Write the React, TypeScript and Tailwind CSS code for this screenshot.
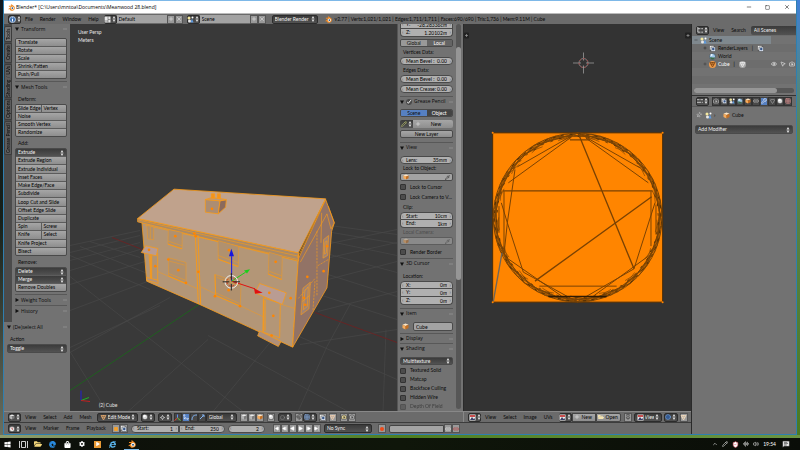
import React from "react";
import clsx from "clsx";
import { FaWindows, FaEdge, FaInternetExplorer, FaShoppingBag, FaFolderOpen, FaCog, FaPlay } from "react-icons/fa";
import {
  AudioLines, Camera, ChevronUp, Circle, Eye, Grid3x3, Link2, Magnet, MessageSquareText, Minus, MousePointer2,
  Move3d, Pencil, Pipette, Pin, Play, Plus, ShieldCheck, SkipBack, SkipForward, Square, StepBack, StepForward, Triangle, Volume2, Wrench, X,
} from "lucide-react";

type IconProps = { className?: string };

/* ---------- small icons ---------- */

const Logo = ({ className = "size-[8px]" }: IconProps) => (
  <svg viewBox="0 0 24 24" className={clsx("shrink-0", className)}>
    <path d="M1 17 11 9H3V6h9L9 3l3-2 9 7c4 4 3 12-3 14-6 3-12 0-12-5l-3 2z" fill="#f08a24" />
    <circle cx="15" cy="14" r="5.5" fill="#fff" />
    <circle cx="15" cy="14" r="3" fill="#265787" />
  </svg>
);

const CubeIcon = ({ className = "size-[7px]" }: IconProps) => (
  <svg viewBox="0 0 14 14" className={clsx("shrink-0", className)}>
    <path d="M7 1 13 3.500 7 6 1 3.500z" fill="#ffe6c4" />
    <path d="M1 3.500 7 6v7L1 10z" fill="#f7ab5a" />
    <path d="M13 3.500 7 6v7l6-3z" fill="#c46f22" />
  </svg>
);

const SphereIcon = ({ className = "size-[6px]" }: IconProps) => (
  <svg viewBox="0 0 12 12" className={clsx("shrink-0", className)}>
    <circle cx="6" cy="6" r="5.500" fill="#d8d8d8" stroke="#222" />
    <circle cx="5" cy="4" r="2.500" fill="#fff" />
  </svg>
);

const SceneIcon = ({ className = "size-[7px]" }: IconProps) => (
  <svg viewBox="0 0 14 14" className={clsx("shrink-0", className)}>
    <circle cx="4" cy="4" r="3" fill="#f5e9a0" />
    <path d="M7 13 10 5l3 8z" fill="#5f9be0" />
    <circle cx="5" cy="10" r="3" fill="#e8e8e8" />
    <circle cx="11" cy="3" r="2" fill="#fff" />
  </svg>
);

const LayersIcon = ({ className = "size-[7px]" }: IconProps) => (
  <svg viewBox="0 0 14 14" className={clsx("shrink-0", className)}>
    <path d="M1 1h9v9H1z" fill="#ececec" stroke="#444" />
    <path d="M4 4h9v9H4z" fill="#d6dfec" stroke="#444" />
    <circle cx="8.500" cy="8" r="2.500" fill="#39588a" />
  </svg>
);

const WorldIcon = ({ className = "size-[7px]" }: IconProps) => (
  <svg viewBox="0 0 14 14" className={clsx("shrink-0", className)}>
    <circle cx="7" cy="7" r="6" fill="#9fc6e8" stroke="#26313d" />
    <path d="M2 9c3-2 6 1 10 0-1 3-3 4-5 4S3 12 2 9z" fill="#3d6b4a" />
    <circle cx="5" cy="4" r="2" fill="#eef6fd" />
  </svg>
);

const InfoIcon = () => (
  <svg viewBox="0 0 14 14" className="size-[7px] shrink-0">
    <circle cx="7" cy="7" r="6" fill="#3f6fae" stroke="#cfe0f5" strokeWidth="1.500" />
    <path d="M7 6v5M7 3v1.500" stroke="#fff" strokeWidth="2" />
  </svg>
);

const ScreenIcon = () => (
  <svg viewBox="0 0 14 14" className="size-[7px] shrink-0">
    <path d="M1 1h12v12H1z" fill="#e8e8e8" />
    <path d="M8 1v12M8 7h5M1 10h7" stroke="#444" fill="none" />
  </svg>
);

const ClockIcon = () => (
  <svg viewBox="0 0 12 12" className="size-[6px] shrink-0">
    <circle cx="6" cy="6" r="5.500" fill="#e4e4e4" stroke="#222" />
    <path d="M6 3v3l2 1" stroke="#b03030" fill="none" strokeWidth="1.500" />
  </svg>
);

const MeshIcon = ({ className = "size-[7px]", color = "#ddd", disc }: IconProps & { color?: string; disc?: string }) => (
  <svg viewBox="0 0 14 14" className={clsx("shrink-0", className)} fill="none" stroke={color} strokeWidth="1.500">
    {disc && <circle cx="7" cy="7" r="7" fill={disc} stroke="none" />}
    <path d="M2 3h10L7 12zM4.500 7.500h5L7 3z" />
  </svg>
);

const AxisIcon = () => (
  <svg viewBox="0 0 14 14" className="size-[7px] shrink-0" fill="none" strokeWidth="2">
    <path d="M7 8V1" stroke="#5f8df0" />
    <path d="M7 8 1 13" stroke="#e04030" />
    <path d="m7 8 6 5" stroke="#58c040" />
  </svg>
);

const ImageIcon = () => (
  <svg viewBox="0 0 14 14" className="size-[7px] shrink-0">
    <path d="M1 1h12v12H1z" fill="#eee" />
    <path d="M2 2h10v4H2z" fill="#c94f4f" />
    <path d="m2 12 4-6 3 4 2-2 1 4z" fill="#3a3f66" />
  </svg>
);

const UpDown = () => (
  <svg viewBox="0 0 6 10" className="h-[6px] w-[4px] shrink-0" fill="#ddd">
    <path d="M3 0 5.500 4H.5zM3 10 .5 6h5z" />
  </svg>
);

const Fold = ({ open = true }: { open?: boolean }) => (
  <svg viewBox="0 0 8 8" className="size-[4px] shrink-0" fill="#111">
    <path d={open ? "M0 1h8L4 8z" : "M1 0v8l7-4z"} />
  </svg>
);

/* ---------- widgets ---------- */

const buttonLook = "bg-linear-to-b from-[#a6a6a6] to-[#8e8e8e] text-black";
const darkLook = "bg-linear-to-b from-[#3b3b3b] to-[#525252] text-[#f0f0f0]";
const frame = "rounded-[2px] border border-[#4a4a4a]";
const darkFrame = "rounded-[2px] border border-[#2c2c2c]";

const ToolButton = ({ children }: { children: React.ReactNode }) => (
  <button className={clsx("flex min-h-0 flex-1 items-center px-[2px] whitespace-nowrap", buttonLook)}>{children}</button>
);

const Dropdown = ({ label, value, className, icon }: { label: string; value: string; className?: string; icon?: React.ReactNode }) => (
  <span className={clsx("flex min-w-0 items-center gap-px px-[2px]", darkLook, className)}>
    {icon}
    <select aria-label={label} className="h-full min-w-0 flex-1 appearance-none bg-transparent leading-none outline-none">
      <option>{value}</option>
    </select>
    <UpDown />
  </span>
);

const IconMenu = ({ label, children, className }: { label: string; children: React.ReactNode; className?: string }) => (
  <button aria-label={label} className={clsx("flex h-[9px] shrink-0 items-center justify-center gap-px", darkFrame, darkLook, className ?? "w-[13px]")}>
    {children}
    <UpDown />
  </button>
);

const IconButton = ({ label, children, active, dark }: { label: string; children: React.ReactNode; active?: boolean; dark?: boolean }) => (
  <button
    aria-label={label}
    className={clsx("flex h-[9px] w-[8px] shrink-0 items-center justify-center border", active ? "border-[#444] bg-[#5680c2] text-white" : dark ? "border-[#333] bg-[#484848] text-[#ddd]" : "border-[#555] bg-[#999] text-[#222]")}
  >
    {children}
  </button>
);

const NumberField = ({ name, value, className = "h-[8px] rounded-[4px] border" }: { name: string; value: string; className?: string }) => (
  <label className={clsx("flex min-w-0 shrink-0 items-center border-[#4a4a4a] bg-[#b0b0b0] px-px whitespace-nowrap text-black", className)}>
    <span className="w-[4px] text-[#555]">‹</span>
    <span>{name}</span>
    <input defaultValue={value} className="w-0 min-w-0 flex-1 bg-transparent text-right leading-none outline-none" />
    <span className="w-[4px] text-right text-[#555]">›</span>
  </label>
);

const Check = ({ label, dim }: { label: string; dim?: boolean }) => (
  <label className={clsx("flex shrink-0 items-center gap-[4px] whitespace-nowrap", dim && "opacity-50")}>
    <input type="checkbox" className="size-[6px] shrink-0 appearance-none rounded-[1px] border border-[#333] bg-[#4c4c4c]" />
    <span>{label}</span>
  </label>
);

const SectionHeader = ({ title, open = true, line = true, children }: { title: string; open?: boolean; line?: boolean; children?: React.ReactNode }) => (
  <h2 className={clsx("flex shrink-0 items-center gap-[2px] whitespace-nowrap", line && "border-t border-[#585858]")}>
    <Fold open={open} />
    {children}
    <span className="flex-1 font-['Open_Sans',sans-serif]">{title}</span>
    <svg viewBox="0 0 8 4" className="h-[2px] w-[4px] shrink-0" stroke="#aaa" strokeDasharray="1 1"><path d="M0 1h8M0 3h8" /></svg>
  </h2>
);

const Menu = ({ items, className }: { items: string[]; className?: string }) => (
  <nav className={clsx("flex shrink-0 items-center gap-[7px]", className)}>
    {items.map((item) => (
      <button key={item}>{item}</button>
    ))}
  </nav>
);

/* ---------- top bars ---------- */

const TitleBar = () => (
  <div className="flex h-[13px] shrink-0 items-center border-t border-[#7db8e8] bg-white pl-[4px] text-black">
    <Logo className="size-[7px]" />
    <h1 className="ml-px flex-1 font-['Open_Sans',sans-serif]">Blender* [C:\Users\mntoa\Documents\Meanwood 28.blend]</h1>
    <button aria-label="Minimise" className="flex w-[19px] justify-center"><Minus size={6} /></button>
    <button aria-label="Maximise" className="flex w-[19px] justify-center"><Square size={5} /></button>
    <button aria-label="Close" className="flex w-[19px] justify-center"><X size={6} /></button>
  </div>
);

const DataField = ({ label, value, icon }: { label: string; value: string; icon: React.ReactNode }) => (
  <div className="flex shrink-0 items-center">
    <IconMenu label={`Browse ${label}`}>{icon}</IconMenu>
    <input aria-label={label} defaultValue={value} className="h-[8px] w-[50px] bg-[#a3a3a3] px-[2px] leading-none text-black outline-none" />
    <IconButton label={`Add ${label}`}><Plus size={6} color="#eee" /></IconButton>
    <IconButton label={`Remove ${label}`}><X size={6} color="#eee" /></IconButton>
  </div>
);

const InfoBar = () => (
  <header className="flex h-[11px] shrink-0 items-center border-t border-[#bbb] bg-[#6b6b6b] pl-[4px]">
    <IconMenu label="Editor type"><InfoIcon /></IconMenu>
    <Menu items={["File", "Render", "Window", "Help"]} className="mr-[5px] ml-[4px]" />
    <DataField label="screen" value="Default" icon={<ScreenIcon />} />
    <div className="w-[4px]" />
    <DataField label="scene" value="Scene" icon={<SceneIcon />} />
    <Dropdown label="Render engine" value="Blender Render" className={clsx("ml-[6px] h-[9px] w-[46px]", darkFrame)} />
    <Logo className="mr-[3px] ml-[7px] size-[7px]" />
    <p className="whitespace-nowrap">v2.77 | Verts:1,021/1,021 | Edges:1,711/1,711 | Faces:690/690 | Tris:1,736 | Mem:9.11M | Cube</p>
  </header>
);

/* ---------- tool shelf ---------- */

const tabs = [
  { name: "Tools", height: "h-[16px]" },
  { name: "Create", height: "h-[20px]" },
  { name: "Shading / UVs", height: "h-[34px]" },
  { name: "Options", height: "h-[21px]" },
  { name: "Grease Pencil", height: "h-[34px]" },
];

const addTools = ["Extrude Region", "Extrude Individual", "Inset Faces", "Make Edge/Face", "Subdivide", "Loop Cut and Slide", "Offset Edge Slide", "Duplicate"];

const toolGroup = clsx("flex shrink-0 flex-col gap-px overflow-hidden bg-[#5c5c5c]", frame);
const shelfLabel = "flex h-[9px] shrink-0 items-center px-[3px]";

const ToolShelf = () => (
  <aside className="flex w-[66px] shrink-0 flex-col bg-[#727272]">
    <div className="flex h-[298px] shrink-0">
      <div className="flex w-[8px] shrink-0 flex-col gap-px bg-[#4b4b4b] pt-[2px]">
        {tabs.map((tab, i) => (
          <button key={tab.name} className={clsx("flex shrink-0 rotate-180 items-center justify-center rounded-r-[2px] border border-[#3c3c3c] whitespace-nowrap [writing-mode:vertical-rl]", tab.height, i === 0 ? "bg-[#727272]" : "bg-[#5c5c5c]")}>
            {tab.name}
          </button>
        ))}
      </div>
      <div className="flex min-w-0 flex-1 flex-col px-[3px]">
        <div className="flex h-[10px] flex-col *:flex-1"><SectionHeader title="Transform" line={false} /></div>
        <div className={clsx("mt-[4px] h-[41px]", toolGroup)}>
          {["Translate", "Rotate", "Scale", "Shrink/Fatten", "Push/Pull"].map((t) => <ToolButton key={t}>{t}</ToolButton>)}
        </div>
        <div className="mt-[2px] flex h-[11px] flex-col *:flex-1"><SectionHeader title="Mesh Tools" /></div>
        <p className={clsx("mt-[3px]", shelfLabel)}>Deform:</p>
        <div className={clsx("h-[33px]", toolGroup)}>
          <div className="grid min-h-0 flex-1 grid-cols-2 gap-px"><ToolButton>Slide Edge</ToolButton><ToolButton>Vertex</ToolButton></div>
          {["Noise", "Smooth Vertex", "Randomize"].map((t) => <ToolButton key={t}>{t}</ToolButton>)}
        </div>
        <p className={clsx("mt-[2px]", shelfLabel)}>Add:</p>
        <div className={clsx("h-[108px]", toolGroup)}>
          <Dropdown label="Extrude" value="Extrude" className="min-h-0 flex-1" />
          {addTools.map((t) => <ToolButton key={t}>{t}</ToolButton>)}
          <div className="grid min-h-0 flex-1 grid-cols-2 gap-px"><ToolButton>Spin</ToolButton><ToolButton>Screw</ToolButton></div>
          <div className="grid min-h-0 flex-1 grid-cols-2 gap-px"><ToolButton>Knife</ToolButton><ToolButton>Select</ToolButton></div>
          <ToolButton>Knife Project</ToolButton>
          <ToolButton>Bisect</ToolButton>
        </div>
        <p className={clsx("mt-[2px]", shelfLabel)}>Remove:</p>
        <div className={clsx("h-[25px]", toolGroup)}>
          <Dropdown label="Delete" value="Delete" className="min-h-0 flex-1" />
          <Dropdown label="Merge" value="Merge" className="min-h-0 flex-1" />
          <ToolButton>Remove Doubles</ToolButton>
        </div>
        <div className="mt-[2px] flex h-[22px] flex-col *:flex-1">
          <SectionHeader title="Weight Tools" open={false} />
          <SectionHeader title="History" open={false} />
        </div>
      </div>
    </div>
    <div className="flex flex-col px-[3px]">
      <div className="flex h-[10px] flex-col *:flex-1"><SectionHeader title="(De)select All" line={false} /></div>
      <p className={clsx("mt-[3px]", shelfLabel)}>Action</p>
      <Dropdown label="Action" value="Toggle" className={clsx("h-[9px]", frame)} />
    </div>
  </aside>
);

/* ---------- 3D viewport ---------- */

const gridLines = [
  [70, 246, 140, 231], [70, 253, 140, 236], [70, 261, 140, 243], [70, 271, 140, 250], [70, 285, 145, 262], [70, 311, 150, 281], [70, 348, 160, 306],
  [70, 353, 93, 340], [93, 340, 170, 298], [128, 412, 208, 340], [213, 412, 270, 343], [298, 412, 327, 347], [383, 412, 386, 330],
  [90, 242, 140, 258], [80, 247, 150, 275], [70, 256, 150, 290], [70, 277, 243, 412], [70, 352, 107, 412], [208, 336, 348, 412], [290, 333, 397, 380],
  [330, 226, 397, 235], [332, 233, 397, 244], [330, 242, 397, 256], [330, 255, 397, 273], [328, 275, 397, 297], [322, 296, 397, 320],
  [330, 244, 397, 230], [330, 258, 397, 243], [328, 280, 397, 262], [318, 312, 397, 292], [300, 345, 397, 330], [327, 347, 350, 305],
];

const houseDots = [
  [208, 162], [312, 212], [212, 170], [452, 247], [151, 170], [160, 272], [311, 332], [433, 340], [445, 409], [220, 277], [72, 211], [91, 260],
  [497, 356], [547, 292], [596, 275], [541, 376], [606, 200], [440, 468], [261, 88], [537, 355], [270, 350], [345, 380], [130, 240], [183, 310],
];

const House = () => (
  <g transform="translate(125 180) scale(.3333)" stroke="#f59a1c" strokeWidth="2.500" strokeLinejoin="round">
    <path d="M50 118 520 222 520 238 503 503 222 374 65 305z" fill="#b39677" />
    <path d="M602 60 628 130 620 155 606 325 503 503 520 238z" fill="#927366" />
    <path d="M38 117v10L520 245v-25z" fill="#a98a68" />
    <path d="M147 29 602 58 520 220 38 117z" fill="#c0a28c" />
    <path d="M42 122 520 230M60 137 518 240" fill="none" strokeWidth="2" />
    <path d="m602 58-84 176M610 80l18 50-10 18-12-45-80 145M590 100l-2 90" fill="none" strokeWidth="2" />
    {/* chimney */}
    <path d="M241 60 285 64 280 103 241 98z" fill="#ac8d72" />
    <path d="m285 64 19-3-2 22-22 20z" fill="#8b6a5c" />
    <path d="m241 60 20-6 43 6-19 4z" fill="#b8977c" />
    <path d="M259 56V43h10v14zM277 57V43h9v15z" fill="#f5931a" />
    {/* down pipe and string course */}
    <path d="M211 165 220 374M219 167 227 375" fill="none" strokeWidth="3" />
    <path d="M95 275 218 328M227 322 415 412M470 375 510 387" fill="none" strokeWidth="1.500" />
    {/* windows */}
    <g fill="#b0916f" strokeWidth="1.500">
      <path d="m66 138 20 5v38l-18-3zM76 142v37" />
      <path d="m130 150 42 9-1 49-42-14zM130 185l42 14" />
      <path d="m279 183 62 18-1 60-60-22zM279 228l62 22" />
      <path d="m432 218 40 12-2 70-40-16zM432 275l38 14" />
      <path d="m131 235 52 14v63l-52-22zM134 245l45 12M131 282l50 20" />
      <path d="m270 285 78 28-2 67-74-32zM276 294l66 24M272 340l72 32" />
    </g>
    <path d="m279 239 60 22M129 194l42 14M131 290l52 22M270 285l2 63 74 32M430 284l40 16" fill="none" strokeWidth="3" />
    <path d="m534 326 22-18-4 80-24 18zM540 332l10-9-3 58-12 10zM532 366l22-18M596 180l15-12-3 60-14 8zM600 188l6-4-2 36-6 4z" fill="#a08374" strokeWidth="2" />
    <path d="M576 155v103M610 240l-34 20v90M520 357l50-60M570 305l-6 88" fill="none" strokeWidth="2" strokeDasharray="7 3" />
    {/* porches */}
    <path d="M72 228 98 222 98 305 80 300z" fill="#b19474" />
    <path d="M76 228v68M80 228v70" fill="none" strokeWidth="3" />
    <path d="m62 199 37 8-5 22-45-10z" fill="#b99c93" />
    <path d="m65 294 34 8v10l-34-10z" fill="#b0917a" />
    <path d="M416 355 466 372 464 475 414 458z" fill="#b39677" />
    <path d="M415 358v98M420 362v92" fill="none" strokeWidth="3" />
    <path d="m404 312 80 28-12 35-82-35z" fill="#b99c93" />
    <path d="m404 454 64 32-8 15-62-32z" fill="#af8f79" />
    <g fill="#ff8500" stroke="none">
      {houseDots.map(([x, y]) => <circle key={`${x}-${y}`} cx={x} cy={y} r="4" />)}
    </g>
    {/* transform manipulator */}
    <g fill="none" strokeWidth="3">
      <path d="M320 305V230" stroke="#1515e0" />
      <path d="m320 305 70 23" stroke="#e01010" />
      <path d="m320 305 42-27" stroke="#18d018" />
      <circle cx="319" cy="307" r="19" stroke="#eee" />
      <circle cx="319" cy="307" r="13" stroke="#d03a20" strokeDasharray="6 5" />
      <path d="M319 281v20M319 313v20M293 307h20M325 307h20" stroke="#222" />
    </g>
    <path d="m312 230 7-22 8 22z" fill="#1515e0" stroke="none" />
    <path d="m387 326 26 14-23 3z" fill="#e01010" stroke="none" />
    <path d="m357 273 18-4-9 13z" fill="#18d018" stroke="none" />
  </g>
);

const Viewport = () => (
  <section className="relative min-w-0 flex-1 overflow-hidden bg-[#393939] text-[#e4e4e4]">
    <svg viewBox="70 24 327 388" preserveAspectRatio="xMidYMid slice" className="size-full">
      <g stroke="#484848" strokeWidth=".7">
        {gridLines.map(([x1, y1, x2, y2]) => <line key={`${x1}-${y1}-${x2}-${y2}`} x1={x1} y1={y1} x2={x2} y2={y2} />)}
      </g>
      <path d="m112 238 33 13M315 313l82 30" stroke="#701f1f" strokeWidth=".8" />
      <path d="m70 391 129-86" stroke="#1f5f1f" />
      <House />
      <g fill="none">
        <path d="M81 401V391" stroke="#2020d0" />
        <path d="m81 401 8-3" stroke="#20b020" />
        <path d="m81 401 9 1" stroke="#c02020" />
      </g>
    </svg>
    <div className="absolute top-[4px] left-[8px] leading-[8px]">
      <p>User Persp</p>
      <p>Meters</p>
    </div>
    <p className="absolute bottom-[3px] left-[29px]">(2) Cube</p>
  </section>
);

/* ---------- properties region of the 3D view ---------- */

const groupRow = "h-[8px] border-x border-b";
const regionLabel = "flex shrink-0 items-center px-[3px]";

const ObjectPicker = ({ label, dim }: { label: string; dim?: boolean }) => (
  <div className={clsx("flex h-[8px] shrink-0 items-center bg-[#a3a3a3] px-[2px]", frame, dim && "opacity-50")}>
    <CubeIcon className="size-[6px]" />
    <input aria-label={label} className="w-0 min-w-0 flex-1 bg-transparent outline-none" />
    <Pipette size={5} color="#222" />
  </div>
);

const SideRegion = () => (
  <aside className="flex w-[66px] shrink-0 overflow-hidden border-l border-[#555] bg-[#727272]">
    <div className="flex min-w-0 flex-1 flex-col pr-[3px] pl-[2px]">
      <div className="flex h-[13px] shrink-0 flex-col justify-end overflow-hidden">
        <NumberField name="Y:" value="-28.28336cm" className={groupRow} />
        <NumberField name="Z:" value="1.20102m" className={clsx(groupRow, "rounded-b-[4px]")} />
      </div>
      <div className={clsx("mt-[2px] flex h-[8px] shrink-0 overflow-hidden", frame)}>
        <button className="flex-1 bg-[#999]">Global</button>
        <button className="flex-1 bg-[#646464] text-white">Local</button>
      </div>
      <p className={clsx("h-[10px]", regionLabel)}>Vertices Data:</p>
      <NumberField name="Mean Bevel :" value="0.00" />
      <p className={clsx("h-[10px]", regionLabel)}>Edges Data:</p>
      <NumberField name="Mean Bevel :" value="0.00" />
      <NumberField name="Mean Crease:" value="0.00" className="mt-[2px] h-[8px] rounded-[4px] border" />
      <div className="mt-[3px] flex h-[10px] shrink-0 flex-col *:flex-1">
        <SectionHeader title="Grease Pencil">
          <input type="checkbox" defaultChecked aria-label="Grease Pencil" className="size-[6px] rounded-[1px] accent-[#4a4a4a]" />
        </SectionHeader>
      </div>
      <div className={clsx("mt-[3px] flex h-[8px] shrink-0 overflow-hidden", frame)}>
        <button className="flex-1 bg-[#5680c2]">Scene</button>
        <button className="flex-1 bg-[#444] text-white">Object</button>
      </div>
      <div className="mt-[3px] flex h-[8px] shrink-0">
        <button aria-label="Browse grease pencil" className={clsx("flex w-[13px] items-center justify-center gap-px rounded-l-[2px]", darkLook)}>
          <Pencil size={6} color="#c9d070" /><UpDown />
        </button>
        <button className={clsx("flex flex-1 items-center rounded-r-[2px] px-[2px]", buttonLook)}>
          <Plus size={6} color="#eee" /><span className="flex-1">New</span>
        </button>
      </div>
      <button className={clsx("mt-[2px] h-[8px] shrink-0", buttonLook, frame)}>New Layer</button>
      <div className="mt-[4px] flex h-[10px] shrink-0 flex-col *:flex-1"><SectionHeader title="View" /></div>
      <NumberField name="Lens:" value="35mm" className="mt-[4px] h-[8px] rounded-[4px] border" />
      <p className={clsx("h-[9px]", regionLabel)}>Lock to Object:</p>
      <ObjectPicker label="Lock to Object" />
      <div className="flex h-[22px] shrink-0 flex-col pt-px *:h-[10px]">
        <Check label="Lock to Cursor" />
        <Check label="Lock Camera to V…" />
      </div>
      <p className={clsx("h-[9px]", regionLabel)}>Clip:</p>
      <NumberField name="Start:" value="10cm" className="h-[8px] rounded-t-[4px] border" />
      <NumberField name="End:" value="1km" className={clsx(groupRow, "rounded-b-[4px]")} />
      <p className={clsx("h-[9px] text-[#4c4c4c]", regionLabel)}>Local Camera:</p>
      <ObjectPicker label="Local Camera" dim />
      <div className="flex h-[13px] shrink-0 flex-col pt-[2px] *:h-[10px]"><Check label="Render Border" /></div>
      <div className="flex h-[10px] shrink-0 flex-col *:flex-1"><SectionHeader title="3D Cursor" /></div>
      <p className={clsx("mt-[3px] h-[10px]", regionLabel)}>Location:</p>
      <NumberField name="X:" value="0m" className="h-[8px] rounded-t-[4px] border" />
      <NumberField name="Y:" value="0m" className={groupRow} />
      <NumberField name="Z:" value="0m" className={clsx(groupRow, "rounded-b-[4px]")} />
      <div className="mt-[3px] flex h-[10px] shrink-0 flex-col *:flex-1"><SectionHeader title="Item" /></div>
      <div className="mt-[4px] flex h-[9px] shrink-0 items-center gap-[4px] pl-[2px]">
        <CubeIcon />
        <input aria-label="Object name" defaultValue="Cube" className={clsx("h-full w-0 flex-1 bg-[#a3a3a3] px-[2px] leading-none text-black outline-none", frame)} />
      </div>
      <div className="mt-[2px] flex h-[20px] shrink-0 flex-col *:flex-1">
        <SectionHeader title="Display" open={false} />
        <SectionHeader title="Shading" />
      </div>
      <Dropdown label="Shading mode" value="Multitexture" className={clsx("mt-[4px] h-[8px] shrink-0", frame)} />
      <div className="mt-px flex shrink-0 flex-col *:h-[9px]">
        <Check label="Textured Solid" />
        <Check label="Matcap" />
        <Check label="Backface Culling" />
        <Check label="Hidden Wire" />
        <Check label="Depth Of Field" dim />
      </div>
    </div>
    <div className="mr-[2px] mb-[2px] w-[5px] shrink-0 rounded-full bg-[#565656] pt-[23px]">
      <div className="h-[233px] rounded-full bg-[#969696]" />
    </div>
  </aside>
);

const View3DHeader = () => (
  <header className="flex h-[11px] shrink-0 items-center overflow-hidden border-t border-[#888] bg-[#6b6b6b] pl-[4px]">
    <IconMenu label="Editor type"><CubeIcon className="size-[6px] grayscale" /></IconMenu>
    <Menu items={["View", "Select", "Add", "Mesh"]} className="ml-[4px]" />
    <Dropdown label="Mode" value="Edit Mode" icon={<MeshIcon color="#f0b070" />} className={clsx("ml-[5px] h-[9px] w-[41px] shrink-0", darkFrame)} />
    <div className="ml-[3px] flex gap-[3px]">
      <IconMenu label="Viewport shading" className="w-[14px]"><SphereIcon /></IconMenu>
      <IconMenu label="Pivot point" className="w-[14px]">
        <svg viewBox="0 0 6 6" className="size-[5px]" fill="none" stroke="#ccc"><circle cx="3" cy="3" r="1.500" /><path d="M3 0v1M3 5v1M0 3h1M5 3h1" /></svg>
      </IconMenu>
    </div>
    <div className="ml-[2px] flex">
      <IconButton label="Manipulator" dark><AxisIcon /></IconButton>
      <IconButton label="Translate manipulator" active><Move3d size={6} /></IconButton>
      <IconButton label="Rotate manipulator" dark><svg viewBox="0 0 6 6" className="size-[6px]" fill="none" stroke="#7fb0ee"><path d="M1 6c0-3 1-5 5-5" /></svg></IconButton>
      <IconButton label="Scale manipulator" dark><svg viewBox="0 0 6 6" className="size-[6px]" fill="none" stroke="#7fb0ee"><path d="m1 5 4-4M3 1h2v2" /></svg></IconButton>
    </div>
    <Dropdown label="Orientation" value="Global" className="h-[9px] w-[31px] shrink-0 rounded-r-[2px] border border-[#2c2c2c]" />
    <div className="ml-[3px] flex">
      <IconButton label="Vertex select"><CubeIcon className="size-[6px] grayscale" /></IconButton>
      <IconButton label="Edge select"><CubeIcon className="size-[6px] grayscale" /></IconButton>
      <IconButton label="Face select"><CubeIcon className="size-[6px]" /></IconButton>
    </div>
    <div className="ml-[3px] flex gap-[3px]">
      <IconButton label="Limit selection"><SphereIcon /></IconButton>
      <IconMenu label="Proportional editing" className="w-[14px]"><Circle size={5} color="#999" /></IconMenu>
    </div>
    <div className="ml-[3px] flex">
      <IconButton label="Snap"><Magnet size={6} /></IconButton>
      <IconMenu label="Snap element" className="w-[14px]"><Grid3x3 size={6} color="#88b4ee" /></IconMenu>
    </div>
    <div className="ml-[2px] flex gap-[2px]">
      <IconButton label="Snap onto itself"><LayersIcon /></IconButton>
      <IconButton label="Automerge"><MeshIcon color="#f3d0b0" /></IconButton>
    </div>
    <div className="ml-[3px] flex">
      <IconButton label="Render image"><Camera size={6} color="#222" fill="#f0e0a0" /></IconButton>
      <IconButton label="Render animation"><Camera size={6} color="#222" fill="#bbb" /></IconButton>
    </div>
  </header>
);

/* ---------- UV editor ---------- */

// Outer ring of the unwrapped faces: chords that skip `step` points of `count` on one circle.
const ringPath = (count: number, step: number, radius: number) => {
  let d = "";
  for (let i = 0; i < count; i++) {
    const a = (i / count) * Math.PI * 2 - Math.PI / 2;
    const b = ((i + step) / count) * Math.PI * 2 - Math.PI / 2;
    d += `M${293 + radius * Math.cos(a)} ${294 + radius * Math.sin(a)}L${293 + radius * Math.cos(b)} ${294 + radius * Math.sin(b)}`;
  }
  return d;
};

const UVEditor = () => (
  <section className="flex min-w-0 flex-1 overflow-hidden border-l border-[#2a2a2a] bg-[#333]">
    <svg viewBox="464 24 227 388" preserveAspectRatio="xMidYMid slice" className="size-full">
      <rect x="464" y="33" width="5" height="6" rx="1" fill="#222" />
      <path d="M466.500 34.500v3M465 36h3" stroke="#999" strokeWidth=".7" />
      <rect x="685" y="33" width="6" height="6" rx="1" fill="#222" />
      <path d="M688 34.500v3M686.500 36h3" stroke="#999" strokeWidth=".7" />
      <g fill="none" strokeWidth=".8">
        <path d="M583.500 53v8M583.500 66v8M573 63.500h8M586 63.500h8" stroke="#999" />
        <circle cx="583.500" cy="63.500" r="4.500" stroke="#999" />
        <circle cx="583.500" cy="63.500" r="4.500" stroke="#a03030" strokeDasharray="2 2" />
      </g>
      <g transform="translate(480 120) scale(.3333)">
        <path d="M38 40h510v508H38z" fill="#ff8500" stroke="#4a2c08" strokeWidth="3" />
        <g fill="none" stroke="#7a4405" strokeWidth="2">
          <path d={ringPath(64, 1, 253)} strokeWidth="3" />
          <path d={ringPath(38, 3, 253)} />
          <path d={ringPath(23, 2, 253)} strokeWidth="3" />
          <path d={ringPath(17, 2, 253)} strokeDasharray="70 50" />
          <path d={ringPath(29, 1, 246)} strokeWidth="3" strokeDasharray="34 9" />
        </g>
        <g fill="none" stroke="#3a2204" strokeWidth="2">
          <path d={ringPath(31, 1, 251)} strokeDasharray="9 17" />
          <path d={ringPath(27, 1, 243)} strokeDasharray="8 21" />
        </g>
        <g fill="none" stroke="#7a4203" strokeWidth="4">
          <path d="M68 214h450M295 42 462 448M515 232 165 485M270 61h60" />
          <path d="M105 150 82 310 72 405" strokeWidth="3" />
          <path d="M66 400 40 546" stroke="#6b655c" />
          <path d="M64 250 82 310 130 458 293 548M525 250 462 448 293 546" strokeWidth="3" />
          <path d="M280 46 112 142M275 52 85 190M305 46 480 145M318 56 505 190" strokeWidth="3" />
          <path d="M72 215v185M57 260v80M513 215v165M528 255v90" strokeWidth="3" />
          <path d="M178 500h232M80 415 245 530M505 410 340 530" strokeWidth="3" />
          <path d="M205 531h175" stroke="#2c1a04" />
        </g>
        <g fill="#ff8500">
          {[[38, 40], [548, 40], [38, 548], [548, 548]].map(([x, y]) => <circle key={`${x}-${y}`} cx={x} cy={y} r="3" />)}
        </g>
      </g>
    </svg>
  </section>
);

const UVHeader = () => (
  <header className="flex h-[11px] shrink-0 items-center overflow-hidden border-t border-l border-[#888] bg-[#6b6b6b] pl-[4px]">
    <IconMenu label="Editor type"><ImageIcon /></IconMenu>
    <Menu items={["View", "Select", "Image", "UVs"]} className="ml-[4px]" />
    <div className="ml-[6px] flex">
      <IconMenu label="Browse image"><ImageIcon /></IconMenu>
      <button className={clsx("flex h-[9px] w-[24px] items-center gap-[2px] border border-[#444] pl-px", buttonLook)}><Plus size={6} color="#eee" />New</button>
      <button className={clsx("flex h-[9px] w-[25px] items-center gap-[2px] rounded-r-[2px] border border-[#444] pl-px", buttonLook)}><FaFolderOpen size={6} color="#f3e3b0" />Open</button>
    </div>
    <div className="ml-[3px] flex gap-[2px]">
      <IconButton label="Pin image"><Pin size={6} /></IconButton>
      <Dropdown label="Mode" value="View" icon={<ImageIcon />} className={clsx("h-[9px] w-[28px]", darkFrame)} />
      <IconMenu label="Pivot" className="w-[14px]"><Circle size={6} color="#7fb0ee" fill="#355a90" /></IconMenu>
      <IconButton label="Sync selection"><MeshIcon color="#fbe0c0" /></IconButton>
    </div>
  </header>
);

/* ---------- timeline ---------- */

const Timeline = () => (
  <section className="flex h-[12px] shrink-0 items-center overflow-hidden border-t border-[#3c3c3c] bg-[#6b6b6b] pl-[4px]">
    <IconMenu label="Editor type"><ClockIcon /></IconMenu>
    <Menu items={["View", "Marker", "Frame", "Playback"]} className="ml-[4px]" />
    <div className="ml-[6px] flex">
      <IconButton label="Preview range"><span className="size-[4px] rounded-[1px] bg-[#f0a030]" /></IconButton>
      <IconButton label="Lock time"><LayersIcon /></IconButton>
    </div>
    <NumberField name="Start:" value="1" className="ml-[3px] h-[8px] w-[48px] rounded-l-[4px] border" />
    <NumberField name="End:" value="250" className="h-[8px] w-[46px] rounded-r-[4px] border" />
    <NumberField name="" value="2" className="mr-[8px] ml-[3px] h-[8px] w-[37px] rounded-[4px] border" />
    <IconButton label="Jump to start"><SkipBack size={5} fill="#fff" color="#fff" /></IconButton>
    <IconButton label="Previous keyframe"><StepBack size={5} fill="#fff" color="#fff" /></IconButton>
    <IconButton label="Play reverse"><Play size={5} fill="#fff" color="#fff" className="rotate-180" /></IconButton>
    <IconButton label="Play"><Play size={5} fill="#fff" color="#fff" /></IconButton>
    <IconButton label="Next keyframe"><StepForward size={5} fill="#fff" color="#fff" /></IconButton>
    <IconButton label="Jump to end"><SkipForward size={5} fill="#fff" color="#fff" /></IconButton>
    <Dropdown label="Sync mode" value="No Sync" className={clsx("mr-[6px] ml-[3px] h-[9px] w-[48px]", darkFrame)} />
    <IconButton label="Record"><span className="size-[4px] rounded-full bg-[#ee4a18]" /></IconButton>
    <input aria-label="Keying set" className="ml-[3px] h-[8px] w-[55px] rounded-l-[2px] border border-[#444] bg-[#a3a3a3] px-px leading-none outline-none" />
    <IconButton label="Insert keyframe"><Link2 size={6} color="#eee" /></IconButton>
    <IconButton label="Delete keyframe"><Link2 size={6} color="#c03030" /></IconButton>
  </section>
);

/* ---------- outliner and properties ---------- */

const Outliner = () => (
  <section className="flex shrink-0 flex-col border-b border-[#333]">
    <header className="flex h-[12px] items-center bg-[#6b6b6b] pl-[4px]">
      <IconMenu label="Editor type"><svg viewBox="0 0 7 7" className="size-[6px]" fill="none" stroke="#ddd"><path d="M1 0v6h3M1 2h3M5 2h2M5 6h2" /></svg></IconMenu>
      <Menu items={["View", "Search"]} className="mr-[5px] ml-[4px]" />
      <select aria-label="Display mode" className={clsx("h-[9px] min-w-0 flex-1 appearance-none rounded-l-[2px] px-[3px] leading-none", darkLook)}>
        <option>All Scenes</option>
      </select>
    </header>
    <ul className="flex h-[52px] flex-col whitespace-nowrap *:flex *:h-[8px] *:items-center *:gap-[2px]">
      <li className="mr-[25px] bg-[#7f888e] pl-[2px]"><Minus size={4} /><SceneIcon />Scene</li>
      <li className="bg-[#6d6d6d] pl-[11px]"><Plus size={4} /><LayersIcon />RenderLayers<span className="px-[2px]">|</span><LayersIcon /></li>
      <li className="pl-[17px]"><WorldIcon />World</li>
      <li className="bg-[#6d6d6d] pr-px pl-[11px] text-white">
        <Plus size={4} color="#222" /><MeshIcon color="#7a4210" disc="#f09a48" />Cube<span className="px-[2px] text-black">|</span>
        <MeshIcon color="#eee" disc="#a8a8a8" />
        <span className="ml-auto flex gap-[3px]"><Eye size={6} /><MousePointer2 size={6} /><Camera size={6} /></span>
      </li>
      <li />
      <li className="bg-[#6d6d6d]" />
    </ul>
    <div className="mx-[2px] mb-[2px] h-[5px] rounded-full bg-[#575757]">
      <div className="h-full w-5/6 rounded-full bg-[#969696]" />
    </div>
  </section>
);

const propertyTabs = [
  { name: "Render", icon: <Camera size={6} /> },
  { name: "Render layers", icon: <LayersIcon className="size-[6px]" /> },
  { name: "Scene", icon: <SceneIcon className="size-[6px]" /> },
  { name: "World", icon: <WorldIcon className="size-[6px]" /> },
  { name: "Object", icon: <CubeIcon className="size-[6px]" /> },
  { name: "Constraints", icon: <Link2 size={6} /> },
  { name: "Modifiers", icon: <Wrench size={6} /> },
  { name: "Data", icon: <Triangle size={5} className="rotate-180" /> },
  { name: "Material", icon: <SphereIcon /> },
  { name: "Texture", icon: <Grid3x3 size={6} color="#e09090" /> },
];

const Properties = () => (
  <section className="flex flex-1 flex-col">
    <header className="flex h-[11px] shrink-0 items-center overflow-hidden border-b border-[#5a5a5a] bg-[#6b6b6b] pl-[4px]">
      <IconMenu label="Editor type"><svg viewBox="0 0 7 7" className="size-[6px]" stroke="#ddd"><path d="M0 2h3M4 2h3M0 5h5M6 5h1" /></svg></IconMenu>
      <div className="ml-[3px] flex">
        {propertyTabs.map((tab) => <IconButton key={tab.name} label={tab.name} active={tab.name === "Modifiers"} dark>{tab.icon}</IconButton>)}
      </div>
    </header>
    <div className="flex h-[16px] items-center gap-[2px] pl-[4px]">
      <Pin size={6} color="#ddd" className="mr-px rotate-45" /><SceneIcon /><span className="w-[7px]">›</span><CubeIcon />Cube
    </div>
    <Dropdown label="Add Modifier" value="Add Modifier" className={clsx("mx-[3px] mt-[2px] h-[9px]", frame)} />
  </section>
);

/* ---------- desktop ---------- */

const Taskbar = () => (
  <footer className="flex h-[12px] shrink-0 items-center bg-linear-to-r from-[#0d0f0a] via-[#0f160a] to-[#0a0d08] px-[4px] text-white">
    <div className="flex flex-1 items-center *:flex *:w-[15px] *:shrink-0">
      <button aria-label="Start"><FaWindows size={7} /></button>
      <button aria-label="Task view"><svg viewBox="0 0 9 7" className="h-[7px] w-[9px]" fill="none" stroke="#fff"><path d="M2.500.5h4v6h-4zM0 .5h1M0 6.500h1M.5 1v5M8 .5h1M8 6.500h1M8.500 1v5" strokeWidth=".8" /></svg></button>
      <button aria-label="File Explorer"><FaFolderOpen size={8} color="#f3d67a" /></button>
      <button aria-label="Edge"><FaEdge size={7} color="#2a8be0" /></button>
      <button aria-label="Store"><FaShoppingBag size={7} /></button>
      <button aria-label="Settings"><FaCog size={6} /></button>
      <button aria-label="Media Player"><span className="flex size-[7px] items-center justify-center bg-[#e99a35]"><FaPlay size={4} /></span></button>
      <button aria-label="Internet Explorer"><FaInternetExplorer size={7} color="#5cb6ee" /></button>
      <button aria-label="Blender" className="h-[12px] items-center justify-center border-b border-[#7db8e8]"><Logo /></button>
    </div>
    <div className="mr-[6px] flex items-center gap-[4px]">
      <ChevronUp size={6} /><Pencil size={6} /><ShieldCheck size={7} color="#e05060" fill="#fff" /><AudioLines size={6} /><Volume2 size={6} />
      <time>19:54</time>
      <MessageSquareText size={8} fill="#fff" color="#222" className="ml-[2px]" />
    </div>
  </footer>
);

const App = () => (
  <div className="flex h-screen w-full flex-col overflow-hidden bg-[#0d1408] font-['Lato','Open_Sans',sans-serif] text-[5px] leading-none text-[#0a0a0a]">
    <div className="flex min-h-0 flex-1">
      <div className="w-[3px] shrink-0 bg-linear-to-b from-[#101820] via-[#16201a] to-[#6a6f60]" />
      <main className="flex min-w-0 flex-1 flex-col border-r border-b border-l border-[#2f7fb0] bg-[#6b6b6b]">
        <TitleBar />
        <InfoBar />
        <div className="flex min-h-0 flex-1">
          <div className="flex min-w-0 flex-1 flex-col">
            <div className="flex min-h-0 flex-1">
              <div className="flex min-w-0 flex-459 flex-col">
                <div className="flex min-h-0 flex-1">
                  <ToolShelf />
                  <Viewport />
                  <SideRegion />
                </div>
                <View3DHeader />
              </div>
              <div className="flex min-w-0 flex-228 flex-col">
                <UVEditor />
                <UVHeader />
              </div>
            </div>
            <Timeline />
          </div>
          <aside className="flex w-[105px] shrink-0 flex-col border-l border-[#2a2a2a] bg-[#727272]">
            <Outliner />
            <Properties />
          </aside>
        </div>
      </main>
      <div className="w-[3px] shrink-0 bg-linear-to-b from-[#3f7fd8] via-[#5d8450] via-30% to-[#4a7a22]" />
    </div>
    <div className="h-[3px] shrink-0 bg-linear-to-r from-[#8c9a6c] via-[#4f7f22] to-[#6a9444]" />
    <Taskbar />
  </div>
);

export default App;
